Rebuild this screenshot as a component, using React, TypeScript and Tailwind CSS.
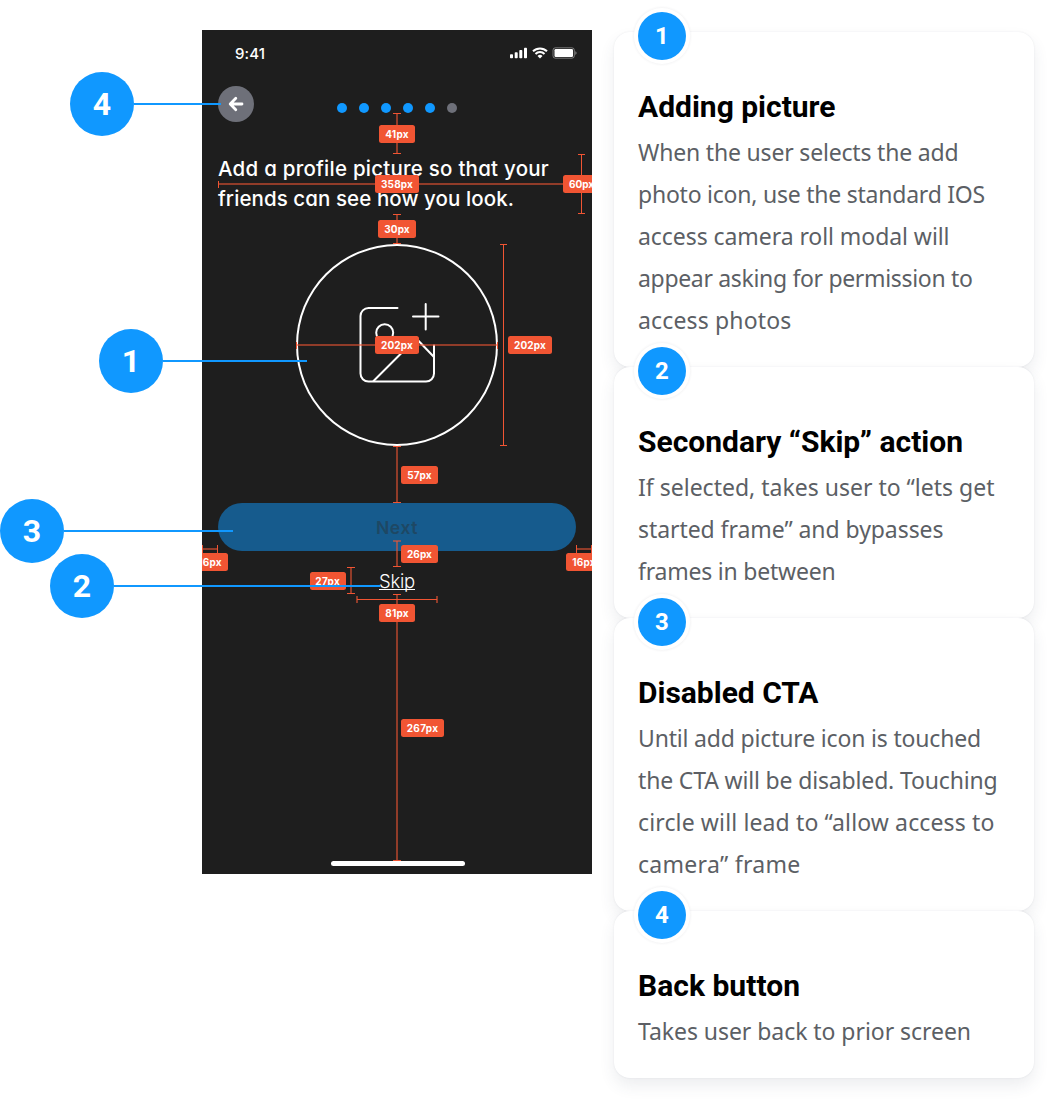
import { useLayoutEffect, useRef, useState } from "react";

/* One line of text whose tracking is adjusted so that it spans `width` pixels. */
function Fit({ text, width, className = "" }: { text: string; width: number; className?: string }) {
  const ref = useRef<HTMLSpanElement>(null);
  const [tracking, setTracking] = useState(0);
  useLayoutEffect(() => {
    const el = ref.current;
    if (!el) return;
    el.style.letterSpacing = "0px";
    const natural = el.getBoundingClientRect().width;
    const next = (width - natural) / text.length;
    el.style.letterSpacing = `${next}px`;
    setTracking(next);
  }, [text, width]);
  return (
    <span ref={ref} className={`inline-block whitespace-nowrap ${className}`} style={{ letterSpacing: `${tracking}px` }}>
      {text}
    </span>
  );
}

type Line = [string, number];

const notes: { n: number; title: Line; lines: Line[] }[] = [
  {
    n: 1,
    title: ["Adding picture", 197.5],
    lines: [
      ["When the user selects the add", 320.5],
      ["photo icon, use the standard IOS", 347],
      ["access camera roll modal will", 311.5],
      ["appear asking for permission to", 334.5],
      ["access photos", 153.5],
    ],
  },
  {
    n: 2,
    title: ["Secondary “Skip” action", 325],
    lines: [
      ["If selected, takes user to “lets get", 356.5],
      ["started frame” and bypasses", 305.5],
      ["frames in between", 197.5],
    ],
  },
  {
    n: 3,
    title: ["Disabled CTA", 180.5],
    lines: [
      ["Until add picture icon is touched", 343],
      ["the CTA will be disabled. Touching", 359.5],
      ["circle will lead to “allow access to", 356.5],
      ["camera” frame", 162.5],
    ],
  },
  { n: 4, title: ["Back button", 162], lines: [["Takes user back to prior screen", 333]] },
];

function Note({ n, title, lines }: (typeof notes)[number]) {
  return (
    <section className="relative rounded-2xl bg-white px-6 pt-[57px] pb-[26px] shadow-[0_8px_16px_rgba(58,68,88,0.09),0_0_2px_rgba(58,68,88,0.10)]">
      <span className="absolute -top-5 left-6 flex size-12 items-center justify-center rounded-full bg-[#1098ff] font-['Roboto',sans-serif] text-2xl font-bold text-white shadow-[0_0_0_4px_#fff,0_0_2px_5px_rgba(58,68,88,0.05)]">
        {n}
      </span>
      <h2 className="mb-[6px] h-9 font-['Roboto',sans-serif] text-[30px] leading-9 font-bold text-black">
        <Fit text={title[0]} width={title[1]} />
      </h2>
      {lines.map(([text, width]) => (
        <p key={text} className="h-[42px] font-['Noto_Sans',sans-serif] text-[23px] leading-[42px] text-[#5c5f65]">
          <Fit text={text} width={width} />
        </p>
      ))}
    </section>
  );
}

/* Redline geometry, in screen coordinates of the phone frame: x, y, width, height, translucent. */
const strokes: [number, number, number, number, boolean][] = [
  [194, 84, 2, 39, true], [191, 83, 8, 1, false], [191, 123, 8, 1, false],
  [16, 153, 360, 2, true], [16, 151, 1, 7, false],
  [379, 124, 1, 60, false], [376, 124, 7, 1, false], [376, 183, 7, 1, false],
  [194, 185, 2, 29, true], [191, 184, 8, 1, false], [191, 213, 8, 1, false],
  [94, 314, 202, 2, true], [94, 312, 1, 7, false], [295, 312, 1, 7, false],
  [301, 214, 1, 202, false], [298, 214, 7, 1, false], [298, 415, 7, 1, false],
  [194, 417, 2, 55, true], [191, 416, 8, 1, false], [191, 472, 8, 1, false],
  [194, 511, 2, 25, true], [191, 510, 8, 2, true], [191, 536, 8, 1, false],
  [148, 538, 2, 25, true], [145, 537, 8, 1, false], [145, 563, 8, 1, false],
  [155, 569, 80, 1, false], [154, 566, 2, 7, true], [234, 566, 2, 7, true],
  [194, 565, 2, 265, true], [191, 564, 8, 1, false], [191, 830, 8, 1, false],
  [0, 518, 16, 2, true], [0, 515, 1, 8, false], [15, 515, 1, 8, false],
  [374, 518, 16, 2, true], [374, 515, 1, 8, false], [389, 515, 1, 8, false],
];

/* Label text, x, y, width, text width. */
const labels: [string, number, number, number, number][] = [
  ["41px", 177, 94.7, 36, 23.5],
  ["358px", 173, 144.7, 44, 32],
  ["60px", 361, 145, 37, 25],
  ["30px", 176, 190, 38, 25.5],
  ["202px", 173, 305.7, 44, 32],
  ["202px", 306, 306, 44, 32],
  ["57px", 199, 435.5, 37, 24.5],
  ["26px", 199, 515, 37, 25],
  ["27px", 107.5, 541.5, 36.5, 25],
  ["81px", 177, 574, 36, 23.5],
  ["267px", 199, 689, 43, 31.5],
  ["16px", -10, 522.5, 36, 23.5],
  ["16px", 364, 522.5, 36, 23.5],
];

function Redlines() {
  return (
    <div className="pointer-events-none absolute inset-0">
      {strokes.map(([left, top, width, height, soft], i) => (
        <i key={i} className={`absolute bg-[#f15533] ${soft ? "opacity-55" : ""}`} style={{ left, top, width, height }} />
      ))}
      {labels.map(([text, left, top, width, textWidth], i) => (
        <span
          key={i}
          className="absolute flex h-[18px] items-center justify-center rounded-[2.5px] bg-[#f15533] font-['Inter',sans-serif] text-[10px] leading-none font-bold text-white"
          style={{ left, top, width }}
        >
          <Fit text={text} width={textWidth} />
        </span>
      ))}
    </div>
  );
}

function StatusBar() {
  return (
    <div className="flex h-11 items-center justify-between pr-[15px] pl-[33px] text-white">
      <span className="pt-0.5 font-['Inter',sans-serif] text-[15px] leading-none font-medium">
        <Fit text="9:41" width={30} />
      </span>
      <svg className="mt-0.5" width="67" height="12" viewBox="0 0 67 12" fill="currentColor">
        <rect x="0" y="7.3" width="3" height="4" rx="0.8" />
        <rect x="4.7" y="5.3" width="3" height="6" rx="0.8" />
        <rect x="9.3" y="3" width="3" height="8.3" rx="0.8" />
        <rect x="14" y="0.7" width="3" height="10.6" rx="0.8" />
        <g fill="none" stroke="currentColor" strokeWidth="2">
          <path d="M23 4.300a10 10 0 0 1 14 0" />
          <path d="M25.500 7a6.300 6.300 0 0 1 9 0" />
        </g>
        <path d="M27.500 9a3.600 3.600 0 0 1 5 0L30 11.600z" />
        <rect x="43" y="0.800" width="21.300" height="10.400" rx="2.400" fill="none" stroke="currentColor" opacity="0.400" />
        <rect x="44.500" y="2.100" width="18.500" height="7.800" rx="1.200" />
        <path d="M65.300 4.300v3.600c.8-.3 1.300-1 1.300-1.800s-.5-1.500-1.300-1.800z" opacity="0.450" />
      </svg>
    </div>
  );
}

function AddPictureIcon() {
  return (
    <svg width="202" height="202" viewBox="0 0 202 202" fill="none" stroke="#fff" strokeWidth="2" strokeLinecap="round">
      <path d="M101.500 64H72.500a8 8 0 0 0-8 8v57.600a8 8 0 0 0 8 8h57.500a8 8 0 0 0 8-8V101.500" />
      <path d="M129.700 60v25.500M117 72.500h25.500" />
      <circle cx="88.700" cy="88.700" r="8.500" />
      <path d="M77.500 137l40.500-40.500a3 3 0 0 1 4.200 0L137.500 112.500" />
    </svg>
  );
}

function Phone() {
  return (
    <main className="relative flex h-[844px] w-[390px] flex-none flex-col overflow-hidden bg-[#1e1e1e]">
      <StatusBar />
      <div className="mt-3 flex h-9 items-center pl-4">
        <button className="flex size-9 items-center justify-center rounded-full bg-[#6e7079] text-white">
          <svg width="16" height="16" viewBox="0 0 16 16" fill="none" stroke="currentColor" strokeWidth="2.800" strokeLinecap="round" strokeLinejoin="round">
            <path d="M14 8H2.500M7.800 2.300L2.200 8l5.600 5.700" />
          </svg>
        </button>
        <div className="mt-2 ml-[83px] flex gap-3">
          {[1, 2, 3, 4, 5].map((step) => (
            <span key={step} className="size-2.5 rounded-full bg-[#1098ff]" />
          ))}
          <span className="size-2.5 rounded-full bg-[#6e7079]" />
        </div>
      </div>
      <h1 className="mt-8 flex flex-col pl-4 font-['Inter',sans-serif] text-[20.5px] leading-[30px] font-medium text-white [font-feature-settings:'cv11']">
        <Fit className="self-start" text="Add a profile picture so that your" width={331} />
        <Fit className="self-start" text="friends can see how you look." width={296} />
      </h1>
      <div className="mt-[30px] flex size-[202px] items-center justify-center self-center rounded-full shadow-[inset_0_0_0_2px_#fff]">
        <AddPictureIcon />
      </div>
      <button className="mx-4 mt-[57px] h-12 flex-none rounded-full bg-[#165b8d] pt-0.5 font-['Inter',sans-serif] text-[17.5px] font-semibold text-[#1e4864]">
        <Fit text="Next" width={42} />
      </button>
      <Redlines />
      <span className="absolute bottom-2 left-[129px] h-[5px] w-[134px] rounded-full bg-white" />
    </main>
  );
}

/* Numbered marker and its leader: left, top, leader length. */
const pins: [number, number, number, number][] = [
  [4, 70, 72, 87],
  [1, 99, 329, 144],
  [3, 0, 499, 169],
  [2, 50, 554, 266],
];

export default function App() {
  return (
    <div className="relative flex h-[1102px] w-[1050px] items-start gap-[22px] overflow-hidden bg-white pl-[202px]">
      <div className="mt-[30px]">
        <Phone />
      </div>
      <aside className="mt-8 flex w-[420px] flex-none flex-col">
        {notes.map((note) => (
          <Note key={note.n} {...note} />
        ))}
      </aside>
      {pins.map(([n, left, top, length]) => (
        <div key={n} className="absolute flex items-center" style={{ left, top }}>
          <span className="flex size-16 items-center justify-center rounded-full bg-[#1098ff] font-['Roboto',sans-serif] text-[32px] font-bold text-white">
            {n}
          </span>
          <span className="h-0.5 bg-[#1098ff]" style={{ width: length }} />
        </div>
      ))}
      <a className="absolute top-[568px] left-[379px] h-[22px] border-b border-white font-['Inter',sans-serif] text-[18.5px] leading-[26px] font-light text-white">
        <Fit text="Skip" width={36} />
      </a>
    </div>
  );
}
